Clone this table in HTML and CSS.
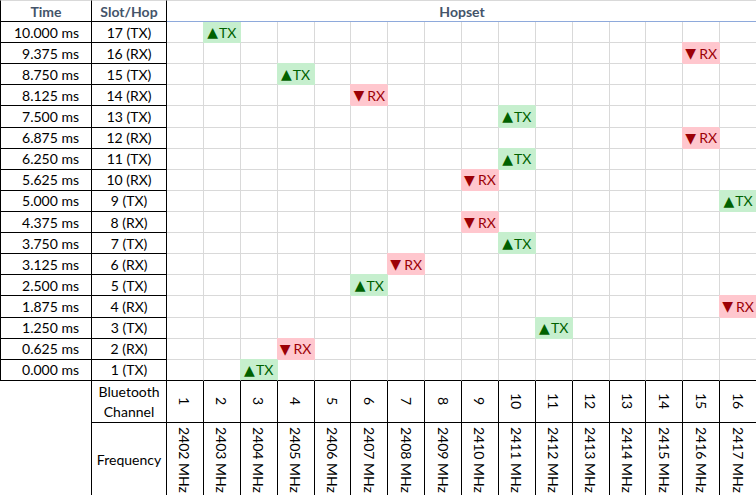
FILE: index.html
```html
<!DOCTYPE html>
<html>
<head>
<meta charset="utf-8">
<link rel="stylesheet" href="styles.css">
</head>
<body>
<div class="sheet">
  <div class="hd first">Time</div><div class="hd">Slot/Hop</div><div class="hop">Hopset</div>

  <div class="t">10.000 ms</div><div class="s">17 (TX)</div>
  <div class="g"></div><div class="g tx top"><span class="tri">▲</span>TX</div><div class="g"></div><div class="g"></div><div class="g"></div><div class="g"></div><div class="g"></div><div class="g"></div><div class="g"></div><div class="g"></div><div class="g"></div><div class="g"></div><div class="g"></div><div class="g"></div><div class="g"></div><div class="g"></div>

  <div class="t">9.375 ms</div><div class="s">16 (RX)</div>
  <div class="g"></div><div class="g"></div><div class="g"></div><div class="g"></div><div class="g"></div><div class="g"></div><div class="g"></div><div class="g"></div><div class="g"></div><div class="g"></div><div class="g"></div><div class="g"></div><div class="g"></div><div class="g"></div><div class="g rx"><span class="tri">▼</span>RX</div><div class="g"></div>

  <div class="t">8.750 ms</div><div class="s">15 (TX)</div>
  <div class="g"></div><div class="g"></div><div class="g"></div><div class="g tx"><span class="tri">▲</span>TX</div><div class="g"></div><div class="g"></div><div class="g"></div><div class="g"></div><div class="g"></div><div class="g"></div><div class="g"></div><div class="g"></div><div class="g"></div><div class="g"></div><div class="g"></div><div class="g"></div>

  <div class="t">8.125 ms</div><div class="s">14 (RX)</div>
  <div class="g"></div><div class="g"></div><div class="g"></div><div class="g"></div><div class="g"></div><div class="g rx"><span class="tri">▼</span>RX</div><div class="g"></div><div class="g"></div><div class="g"></div><div class="g"></div><div class="g"></div><div class="g"></div><div class="g"></div><div class="g"></div><div class="g"></div><div class="g"></div>

  <div class="t">7.500 ms</div><div class="s">13 (TX)</div>
  <div class="g"></div><div class="g"></div><div class="g"></div><div class="g"></div><div class="g"></div><div class="g"></div><div class="g"></div><div class="g"></div><div class="g"></div><div class="g tx"><span class="tri">▲</span>TX</div><div class="g"></div><div class="g"></div><div class="g"></div><div class="g"></div><div class="g"></div><div class="g"></div>

  <div class="t">6.875 ms</div><div class="s">12 (RX)</div>
  <div class="g"></div><div class="g"></div><div class="g"></div><div class="g"></div><div class="g"></div><div class="g"></div><div class="g"></div><div class="g"></div><div class="g"></div><div class="g"></div><div class="g"></div><div class="g"></div><div class="g"></div><div class="g"></div><div class="g rx"><span class="tri">▼</span>RX</div><div class="g"></div>

  <div class="t">6.250 ms</div><div class="s">11 (TX)</div>
  <div class="g"></div><div class="g"></div><div class="g"></div><div class="g"></div><div class="g"></div><div class="g"></div><div class="g"></div><div class="g"></div><div class="g"></div><div class="g tx"><span class="tri">▲</span>TX</div><div class="g"></div><div class="g"></div><div class="g"></div><div class="g"></div><div class="g"></div><div class="g"></div>

  <div class="t">5.625 ms</div><div class="s">10 (RX)</div>
  <div class="g"></div><div class="g"></div><div class="g"></div><div class="g"></div><div class="g"></div><div class="g"></div><div class="g"></div><div class="g"></div><div class="g rx"><span class="tri">▼</span>RX</div><div class="g"></div><div class="g"></div><div class="g"></div><div class="g"></div><div class="g"></div><div class="g"></div><div class="g"></div>

  <div class="t">5.000 ms</div><div class="s">9 (TX)</div>
  <div class="g"></div><div class="g"></div><div class="g"></div><div class="g"></div><div class="g"></div><div class="g"></div><div class="g"></div><div class="g"></div><div class="g"></div><div class="g"></div><div class="g"></div><div class="g"></div><div class="g"></div><div class="g"></div><div class="g"></div><div class="g tx"><span class="tri">▲</span>TX</div>

  <div class="t">4.375 ms</div><div class="s">8 (RX)</div>
  <div class="g"></div><div class="g"></div><div class="g"></div><div class="g"></div><div class="g"></div><div class="g"></div><div class="g"></div><div class="g"></div><div class="g rx"><span class="tri">▼</span>RX</div><div class="g"></div><div class="g"></div><div class="g"></div><div class="g"></div><div class="g"></div><div class="g"></div><div class="g"></div>

  <div class="t">3.750 ms</div><div class="s">7 (TX)</div>
  <div class="g"></div><div class="g"></div><div class="g"></div><div class="g"></div><div class="g"></div><div class="g"></div><div class="g"></div><div class="g"></div><div class="g"></div><div class="g tx"><span class="tri">▲</span>TX</div><div class="g"></div><div class="g"></div><div class="g"></div><div class="g"></div><div class="g"></div><div class="g"></div>

  <div class="t">3.125 ms</div><div class="s">6 (RX)</div>
  <div class="g"></div><div class="g"></div><div class="g"></div><div class="g"></div><div class="g"></div><div class="g"></div><div class="g rx"><span class="tri">▼</span>RX</div><div class="g"></div><div class="g"></div><div class="g"></div><div class="g"></div><div class="g"></div><div class="g"></div><div class="g"></div><div class="g"></div><div class="g"></div>

  <div class="t">2.500 ms</div><div class="s">5 (TX)</div>
  <div class="g"></div><div class="g"></div><div class="g"></div><div class="g"></div><div class="g"></div><div class="g tx"><span class="tri">▲</span>TX</div><div class="g"></div><div class="g"></div><div class="g"></div><div class="g"></div><div class="g"></div><div class="g"></div><div class="g"></div><div class="g"></div><div class="g"></div><div class="g"></div>

  <div class="t">1.875 ms</div><div class="s">4 (RX)</div>
  <div class="g"></div><div class="g"></div><div class="g"></div><div class="g"></div><div class="g"></div><div class="g"></div><div class="g"></div><div class="g"></div><div class="g"></div><div class="g"></div><div class="g"></div><div class="g"></div><div class="g"></div><div class="g"></div><div class="g"></div><div class="g rx"><span class="tri">▼</span>RX</div>

  <div class="t">1.250 ms</div><div class="s">3 (TX)</div>
  <div class="g"></div><div class="g"></div><div class="g"></div><div class="g"></div><div class="g"></div><div class="g"></div><div class="g"></div><div class="g"></div><div class="g"></div><div class="g"></div><div class="g tx"><span class="tri">▲</span>TX</div><div class="g"></div><div class="g"></div><div class="g"></div><div class="g"></div><div class="g"></div>

  <div class="t">0.625 ms</div><div class="s">2 (RX)</div>
  <div class="g"></div><div class="g"></div><div class="g"></div><div class="g rx"><span class="tri">▼</span>RX</div><div class="g"></div><div class="g"></div><div class="g"></div><div class="g"></div><div class="g"></div><div class="g"></div><div class="g"></div><div class="g"></div><div class="g"></div><div class="g"></div><div class="g"></div><div class="g"></div>

  <div class="t">0.000 ms</div><div class="s">1 (TX)</div>
  <div class="g z"></div><div class="g z"></div><div class="g z tx"><span class="tri">▲</span>TX</div><div class="g z"></div><div class="g z"></div><div class="g z"></div><div class="g z"></div><div class="g z"></div><div class="g z"></div><div class="g z"></div><div class="g z"></div><div class="g z"></div><div class="g z"></div><div class="g z"></div><div class="g z"></div><div class="g z"></div>

  <div class="e"></div><div class="s lbl">Bluetooth<br>Channel</div>
  <div class="ch"><span>1</span></div><div class="ch"><span>2</span></div><div class="ch"><span>3</span></div><div class="ch"><span>4</span></div><div class="ch"><span>5</span></div><div class="ch"><span>6</span></div><div class="ch"><span>7</span></div><div class="ch"><span>8</span></div><div class="ch"><span>9</span></div><div class="ch"><span>10</span></div><div class="ch"><span>11</span></div><div class="ch"><span>12</span></div><div class="ch"><span>13</span></div><div class="ch"><span>14</span></div><div class="ch"><span>15</span></div><div class="ch"><span>16</span></div>

  <div class="e"></div><div class="s lbl">Frequency</div>
  <div class="fq"><span>2402 MHz</span></div><div class="fq"><span>2403 MHz</span></div><div class="fq"><span>2404 MHz</span></div><div class="fq"><span>2405 MHz</span></div><div class="fq"><span>2406 MHz</span></div><div class="fq"><span>2407 MHz</span></div><div class="fq"><span>2408 MHz</span></div><div class="fq"><span>2409 MHz</span></div><div class="fq"><span>2410 MHz</span></div><div class="fq"><span>2411 MHz</span></div><div class="fq"><span>2412 MHz</span></div><div class="fq"><span>2413 MHz</span></div><div class="fq"><span>2414 MHz</span></div><div class="fq"><span>2415 MHz</span></div><div class="fq"><span>2416 MHz</span></div><div class="fq"><span>2417 MHz</span></div>
</div>
</body>
</html>
```

FILE: styles.css
```css
html, body {
  margin: 0;
  padding: 0;
  background: #ffffff;
}
body {
  width: 756px;
  height: 495px;
  overflow: hidden;
  font-family: Lato, "DejaVu Sans", sans-serif;
  font-size: 14px;
  color: #000000;
}
.sheet {
  display: grid;
  width: 757px;
  grid-template-columns: 92px 75px repeat(16, 36.875px);
  grid-template-rows: 22px repeat(17, 21.12px) 42.3px 74px;
}
.sheet > div {
  box-sizing: border-box;
  display: flex;
  align-items: center;
  justify-content: center;
  min-width: 0;
  min-height: 0;
  white-space: nowrap;
}
.hd {
  border-top: 1px solid #d9d9d9;
  border-right: 1px solid #000000;
  border-bottom: 1px solid #000000;
  font-weight: bold;
  color: #44546a;
}
.hd.first {
  border-left: 1px solid #000000;
}
.hop {
  grid-column: 3 / span 16;
  border-top: 1px solid #d9d9d9;
  border-bottom: 1px solid #8ea9db;
  font-weight: bold;
  color: #44546a;
}
.sheet > .t {
  border-left: 1px solid #000000;
  border-right: 1px solid #000000;
  border-bottom: 1px solid #000000;
  justify-content: flex-end;
  padding-right: 12px;
}
.s {
  border-right: 1px solid #000000;
  border-bottom: 1px solid #000000;
}
.g {
  border-right: 1px solid #d9d9d9;
  border-bottom: 1px solid #d9d9d9;
}
.g.z {
  border-bottom-color: #000000;
}
.tri {
  font-family: "DejaVu Sans", sans-serif;
  font-size: 14px;
  line-height: 1;
  margin-right: 1px;
}
.tx {
  background: #c6efce;
  color: #006100;
  border-right-color: #c6efce;
  border-bottom-color: #c6efce;
  box-shadow: -1px -1px 0 0 #c6efce;
}
.rx {
  background: #ffc7ce;
  color: #9c0006;
  border-right-color: #ffc7ce;
  border-bottom-color: #ffc7ce;
  box-shadow: -1px -1px 0 0 #ffc7ce;
}
.rx .tri {
  margin-right: 3px;
}
.tx.top {
  box-shadow: -1px 0 0 0 #c6efce;
}
.tx.z {
  border-bottom-color: #000000;
}
.e {
  border-right: 1px solid #000000;
}
.lbl {
  text-align: center;
  line-height: 20px;
}
.ch {
  border-right: 1px solid #000000;
  border-bottom: 1px solid #000000;
}
.ch span,
.fq span {
  writing-mode: vertical-rl;
}
.sheet > .fq {
  border-right: 1px solid #000000;
  align-items: flex-start;
}
.fq span {
  padding-top: 4px;
}
```
